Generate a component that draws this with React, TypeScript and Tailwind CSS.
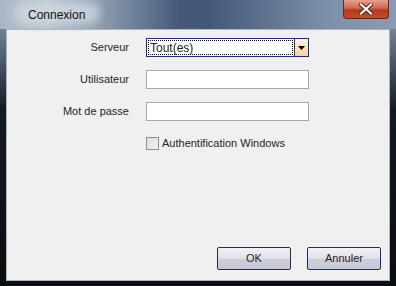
import React from "react";

const font = { fontFamily: '"Liberation Sans", Arial, sans-serif' };

function Field({ label, children }: { label: string; children: React.ReactNode }) {
  return (
    <div className="flex items-center h-[19px]">
      <div className="w-[122px] text-right text-[11px] text-[#1e1e1e]">{label}</div>
      <div className="ml-[17px]">{children}</div>
    </div>
  );
}

export default function App() {
  return (
    <div
      className="w-[396px] h-[286px] flex flex-col overflow-hidden bg-[linear-gradient(to_bottom,#9aa8b8_0px,#56677a_50px,#141a22_110px,#0a0d12_286px)]"
      style={font}
    >
      {/* title bar */}
      <div className="h-[29px] shrink-0 relative bg-[linear-gradient(to_right,#a9b6c4_0%,#b9c4d0_12%,#7d8ea4_30%,#46597a_45%,#42587a_52%,#5a6f8c_65%,#7d8ea8_82%,#8a9bb2_100%)]">
        <div className="absolute left-[14px] top-[2px] h-[22px] w-[86px] rounded-full bg-[#d8dee6]/70 blur-[5px]" />
        <div className="absolute left-[28px] top-[6px] text-[12px] text-[#101010]">Connexion</div>
        {/* close button */}
        <div className="absolute left-[343px] top-0 w-[46px] h-[19px] rounded-b-[4px] border border-t-0 border-[#5a2a20] bg-[linear-gradient(to_bottom,#e8a08c_0%,#d0664c_45%,#b8381c_55%,#c24a2c_100%)] flex items-center justify-center">
          <svg width="14" height="12" viewBox="0 0 14 12">
            <path d="M2 1.5 L12 10.5 M12 1.5 L2 10.5" stroke="#4a2018" strokeWidth="4" strokeLinecap="square" />
            <path d="M2 1.5 L12 10.5 M12 1.5 L2 10.5" stroke="#ffffff" strokeWidth="2.2" strokeLinecap="square" />
          </svg>
        </div>
      </div>

      {/* body */}
      <div className="flex-1 flex px-[6px] pb-[5px]">
        <div className="flex-1 border border-[#aeb4bc] bg-[#f0f0f0] flex flex-col">
          <div className="flex flex-col gap-[13px] pt-[8px]">
            <Field label="Serveur">
              <div className="w-[163px] h-[19px] border border-[#1c2a80] bg-white flex">
                <div className="flex-1 p-[1px]">
                  <div className="h-full border border-dotted border-black flex items-center pl-[1px] text-[12px] text-[#1e1e1e]">
                    Tout(es)
                  </div>
                </div>
                <div className="w-[14px] border-l border-[#1c2a80] bg-[linear-gradient(to_bottom,#fff2dc,#fcd29a)] flex items-center justify-center">
                  <svg width="7" height="4" viewBox="0 0 7 4">
                    <path d="M0 0 H7 L3.5 4 Z" fill="#000" />
                  </svg>
                </div>
              </div>
            </Field>
            <Field label="Utilisateur">
              <div className="w-[163px] h-[19px] border border-[#a4a4b8] bg-white" />
            </Field>
            <Field label="Mot de passe">
              <div className="w-[163px] h-[19px] border border-[#a4a4b8] bg-white" />
            </Field>
            <div className="flex items-center h-[14px] pl-[139px] mt-[2px]">
              <div className="w-[13px] h-[13px] border border-[#8e8f8f] bg-[linear-gradient(135deg,#dcdcdc,#f4f4f4)]" />
              <span className="ml-[3px] text-[11px] text-[#1e1e1e]">Authentification Windows</span>
            </div>
          </div>
          <div className="flex-1" />
          <div className="flex justify-end gap-[16px] pr-[8px] pb-[10px]">
            <div className="w-[74px] h-[23px] border border-[#2e2e3a] rounded-[2px] bg-[linear-gradient(to_bottom,#f2f2f6,#e0e0ea_50%,#cfcfdc_51%,#c6c6d6)] flex items-center justify-center text-[11px] text-[#1e1e1e]">
              OK
            </div>
            <div className="w-[74px] h-[23px] border border-[#1c2a8a] rounded-[2px] bg-[linear-gradient(to_bottom,#f2f2f6,#e0e0ea_50%,#cfcfdc_51%,#c6c6d6)] flex items-center justify-center text-[11px] text-[#1e1e1e]">
              Annuler
            </div>
          </div>
        </div>
      </div>
    </div>
  );
}
